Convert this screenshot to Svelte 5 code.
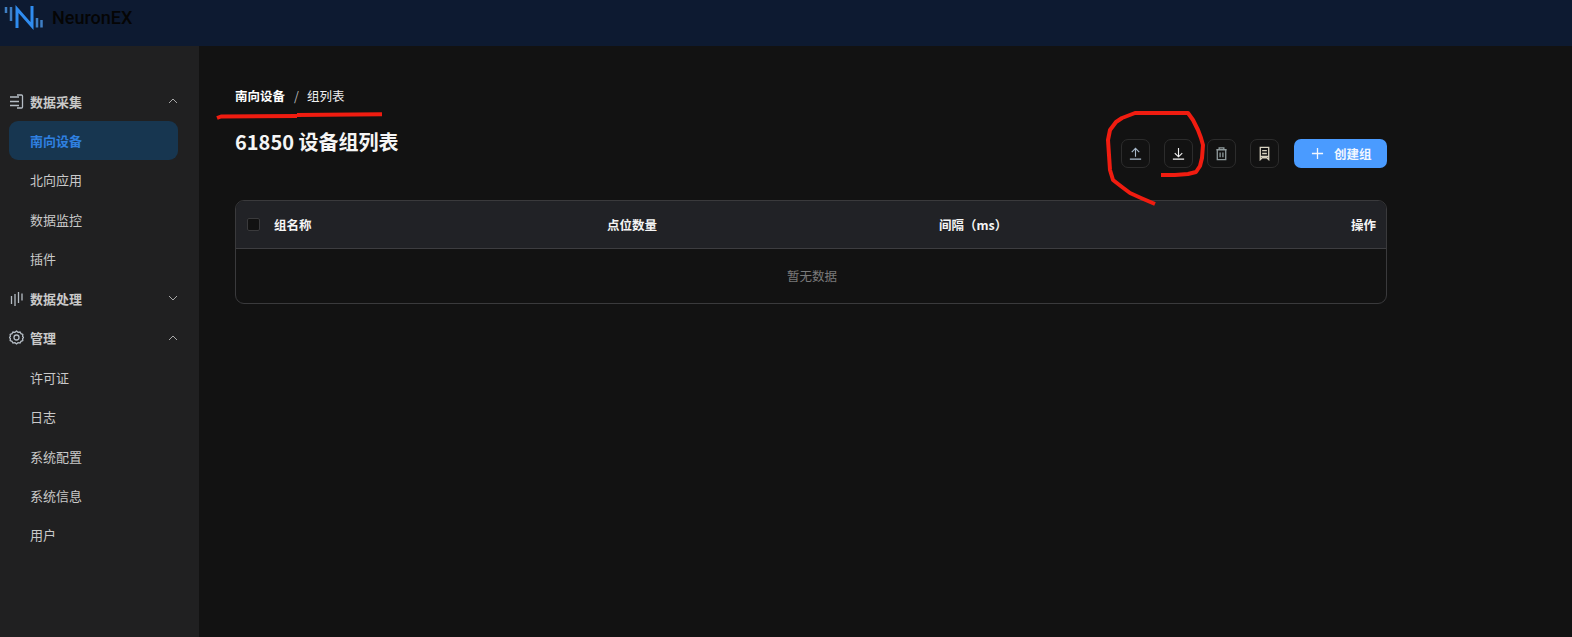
<script>
	const collect = ['南向设备', '北向应用', '数据监控', '插件']
	const manage = ['许可证', '日志', '系统配置', '系统信息', '用户']
</script>

<div class="page">
	<header class="topbar">
		<svg class="logo" width="46" height="30" viewBox="0 0 46 30" fill="none" stroke-width="2.500">
			<path d="M6 7v6M11 7v14" stroke="#3f7fc4" />
			<path d="M17 28V9l15 17V6" stroke="#2f8cf0" stroke-width="3" />
			<path d="M37 18v9.500M41.500 20v7.500" stroke="#3f7fc4" />
		</svg>
		<span class="brand">NeuronEX</span>
	</header>

	<div class="body">
		<aside class="sidebar">
			<div class="group">
				<svg class="icon" viewBox="0 0 15 15" fill="none" stroke="currentColor" stroke-width="1.300"><path d="M8 1h4.500q1 0 1 1v11q0 1-1 1H8M1 3h9M1 7.500h9M1 11.500h9" /></svg>
				<span>数据采集</span>
				<svg class="chev" viewBox="0 0 10 6" fill="none" stroke="currentColor"><path d="M1 5l4-4 4 4" /></svg>
			</div>
			{#each collect as item, i}
				<div class="item" class:active={i === 0}>{item}</div>
			{/each}
			<div class="group">
				<svg class="icon" viewBox="0 0 15 15" fill="none" stroke="currentColor" stroke-width="1.300"><path d="M2.500 5v8M6 3v12M9.500 1v11M13 2.500v7" /></svg>
				<span>数据处理</span>
				<svg class="chev" viewBox="0 0 10 6" fill="none" stroke="currentColor"><path d="M1 1l4 4 4-4" /></svg>
			</div>
			<div class="group">
				<svg class="icon" viewBox="0 0 15 15" fill="none" stroke="currentColor" stroke-width="1.300"><path d="M7.500 1l1.500 1.300 2-.3 1 1.700 1.800.8-.2 2 .9 1-.9 1 .2 2-1.800.8-1 1.700-2-.3L7.500 14l-1.500-1.300-2 .3-1-1.700-1.800-.8.200-2-.9-1 .9-1-.2-2 1.800-.8 1-1.700 2 .3z" /><circle cx="7.500" cy="7.500" r="2.500" /></svg>
				<span>管理</span>
				<svg class="chev" viewBox="0 0 10 6" fill="none" stroke="currentColor"><path d="M1 5l4-4 4 4" /></svg>
			</div>
			{#each manage as item}
				<div class="item">{item}</div>
			{/each}
		</aside>

		<main class="content">
			<nav class="crumbs">
				<b>南向设备</b>
				<i>/</i>
				<span>组列表</span>
			</nav>

			<div class="title-row">
				<h1>61850 设备组列表</h1>
				<div class="actions">
					<button class="tool up" aria-label="上传">
						<svg viewBox="0 0 16 16" fill="none" stroke="currentColor" stroke-width="1.200"><path d="M8 11.500V2.500M4 6.500l4-4 4 4M2 14h12" /></svg>
					</button>
					<button class="tool down" aria-label="下载">
						<svg viewBox="0 0 16 16" fill="none" stroke="currentColor" stroke-width="1.200"><path d="M8 2v9.500M4 7.500l4 4 4-4M2 14h12" /></svg>
					</button>
					<button class="tool trash" aria-label="删除">
						<svg viewBox="0 0 16 16" fill="none" stroke="currentColor" stroke-width="1.400"><path d="M2.500 4h11M5.500 4V2h5v2M3.500 4v10.500h9V4M6.500 7v5M9.500 7v5" /></svg>
					</button>
					<button class="tool doc" aria-label="文档">
						<svg viewBox="0 0 16 16" fill="none" stroke="currentColor" stroke-width="1.400"><path d="M3.500 1.500h9v13l-2-2h-5l-2 2zM5.500 5h5M5.500 8h5M3.500 11h9" /></svg>
					</button>
					<button class="create">
						<svg viewBox="0 0 14 14" fill="none" stroke="currentColor" stroke-width="1.400"><path d="M7 1v12M1 7h12" /></svg>
						创建组
					</button>
				</div>
			</div>

			<div class="table">
				<div class="thead">
					<div class="cell name"><span class="check"></span>组名称</div>
					<div class="cell">点位数量</div>
					<div class="cell">间隔（ms）</div>
					<div class="cell op">操作</div>
				</div>
				<div class="empty">暂无数据</div>
			</div>
		</main>
	</div>

	<!-- hand-drawn markup on top of the screenshot -->
	<svg class="scribble" width="1572" height="637" viewBox="0 0 1572 637" fill="none" stroke="#f01c10" stroke-width="4" stroke-linejoin="round">
		<path d="M217 118l4-1.500 76-.5M297 115l85-.7" />
		<path d="M1155 204L1141 198L1130 193L1122 187L1113 180L1110 170L1109 155L1108 140L1110 130L1116 122L1122 118L1135 113L1188 113L1193 120L1198 130L1201 138L1203 145L1202 158L1200 166L1196 172L1188 174L1175 175L1161 175" />
	</svg>
</div>

<style>
	:global(body) {
		background: #121212;
	}

	.page {
		position: relative;
		width: 1572px;
		height: 637px;
		overflow: hidden;
		display: flex;
		flex-direction: column;
		font-family: "Noto Sans CJK SC", "Noto Sans", sans-serif;
		color: #e6e6e6;
	}

	.topbar {
		height: 46px;
		flex: none;
		background: #0d1a31;
		display: flex;
		align-items: flex-start;
	}

	.logo {
		flex: none;
	}

	.brand {
		margin-left: 6px;
		font: 500 18px/35px Roboto, sans-serif;
		color: #050505;
	}

	.body {
		flex: 1;
		display: flex;
		min-height: 0;
	}

	.sidebar {
		width: 199px;
		flex: none;
		background: #202021;
		padding-top: 35.400px;
		box-sizing: border-box;
		font-size: 13px;
		color: #c9c9c9;
	}

	.group,
	.item {
		height: 39.450px;
		box-sizing: border-box;
		display: flex;
		align-items: center;
	}

	.group {
		padding: 0 21px 0 9px;
		font-weight: 700;
	}

	.group span {
		flex: 1;
		margin-left: 6px;
	}

	.icon {
		width: 15px;
		height: 15px;
		flex: none;
		color: #b4bcc4;
	}

	.chev {
		width: 10px;
		height: 6px;
		color: #a8a8a8;
	}

	.item {
		margin: 0 21px 0 9px;
		padding-left: 21px;
		border-radius: 9px;
	}

	.item.active {
		background: #173650;
		color: #2f80e0;
		font-weight: 700;
	}

	.content {
		flex: 1;
		padding: 39px 0 0 36px;
		background: #121212;
	}

	.crumbs {
		display: flex;
		align-items: center;
		height: 20px;
		font-size: 12.500px;
		color: #f0f0f0;
	}

	.crumbs b {
		font-weight: 700;
		color: #fff;
	}

	.crumbs i {
		margin: 0 8px 0 9px;
		font-style: normal;
		color: #b8b8b8;
	}

	.title-row {
		width: 1152px;
		display: flex;
		justify-content: space-between;
		align-items: flex-start;
		margin-top: 19px;
		height: 76px;
	}

	h1 {
		margin: 3px 0 0;
		font-size: 20px;
		line-height: 30px;
		font-weight: 700;
		color: #f5f5f5;
	}

	.actions {
		display: flex;
		align-items: center;
		gap: 14px;
		margin-top: 15px;
	}

	.tool {
		width: 29px;
		height: 29px;
		padding: 0;
		display: grid;
		place-items: center;
		background: transparent;
		border: 1px solid #2c2c2c;
		border-radius: 7px;
	}

	.tool svg {
		width: 15px;
		height: 15px;
	}

	.up {
		color: #a9bacb;
	}

	.down {
		color: #f2f2f2;
	}

	.trash {
		color: #8f9a9c;
	}

	.doc {
		color: #d8d2c0;
	}

	.create {
		width: 93px;
		height: 29px;
		margin-left: 1px;
		padding: 0 0 0 17px;
		display: flex;
		align-items: center;
		gap: 10px;
		background: #4a9bff;
		border: none;
		border-radius: 7px;
		color: #f2f7ff;
		font: 700 12.500px "Noto Sans CJK SC", sans-serif;
	}

	.create svg {
		width: 13px;
		height: 13px;
		flex: none;
	}

	.table {
		width: 1152px;
		box-sizing: border-box;
		border: 1px solid #3a3a3c;
		border-radius: 9px;
		overflow: hidden;
	}

	.thead {
		height: 47px;
		display: grid;
		grid-template-columns: 371px 332px 1fr auto;
		align-items: center;
		background: #212226;
		border-bottom: 1px solid #3d3d40;
		font-size: 12.500px;
		font-weight: 700;
		color: #f5f5f5;
	}

	.name {
		display: flex;
		align-items: center;
		padding-left: 11px;
	}

	.check {
		width: 13px;
		height: 13px;
		box-sizing: border-box;
		margin-right: 14px;
		background: #121212;
		border: 1px solid #3a3a3c;
		border-radius: 2px;
	}

	.op {
		padding-right: 10px;
	}

	.empty {
		height: 54px;
		box-sizing: border-box;
		padding: 0 0 2px 2px;
		display: grid;
		place-items: center;
		font-size: 12.500px;
		color: #7a7a7a;
	}

	.scribble {
		position: absolute;
		inset: 0;
		pointer-events: none;
	}
</style>
